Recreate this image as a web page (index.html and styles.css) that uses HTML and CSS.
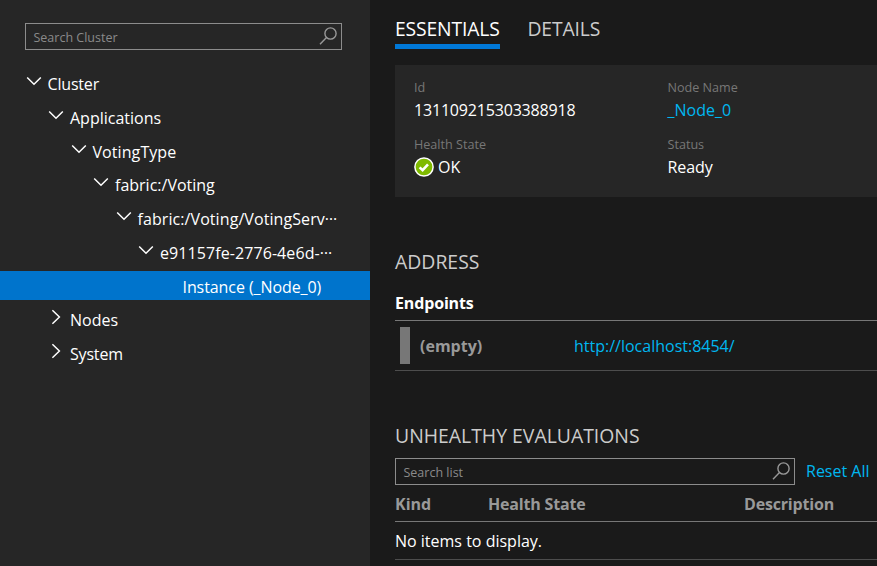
FILE: index.html
```
<!DOCTYPE html>
<html lang="en">
<head>
<meta charset="utf-8">
<title>Cluster Explorer</title>
<link rel="stylesheet" href="styles.css">
</head>
<body>
<div class="app">
  <aside class="sidebar">
    <div class="search search-cluster">
      <span class="hint">Search Cluster</span>
      <svg class="glass" viewBox="0 0 18 18"><circle cx="11.5" cy="6.5" r="5.6"/><path d="M7.5 10.5 1 17.2"/></svg>
    </div>
    <ul class="tree">
      <li class="row l0"><svg class="chev" viewBox="0 0 16 16"><path d="m1.2 4.5 6.8 6.8 6.8-6.8"/></svg><span class="name snug">Cluster</span></li>
      <li class="row l1"><svg class="chev" viewBox="0 0 16 16"><path d="m1.2 4.5 6.8 6.8 6.8-6.8"/></svg><span class="name">Applications</span></li>
      <li class="row l2"><svg class="chev" viewBox="0 0 16 16"><path d="m1.2 4.5 6.8 6.8 6.8-6.8"/></svg><span class="name wide">VotingType</span></li>
      <li class="row l3"><svg class="chev" viewBox="0 0 16 16"><path d="m1.2 4.5 6.8 6.8 6.8-6.8"/></svg><span class="name">fabric:/Voting</span></li>
      <li class="row l4"><svg class="chev" viewBox="0 0 16 16"><path d="m1.2 4.5 6.8 6.8 6.8-6.8"/></svg><span class="name wide">fabric:/Voting/VotingServ<span class="dots">…</span></span></li>
      <li class="row l5"><svg class="chev" viewBox="0 0 16 16"><path d="m1.2 4.5 6.8 6.8 6.8-6.8"/></svg><span class="name wide">e91157fe-2776-4e6d-<span class="dots">…</span></span></li>
      <li class="row l6 selected"><span class="name tight">Instance (_Node_0)</span></li>
      <li class="row l1"><svg class="chev" viewBox="0 0 16 16"><path d="m4.4 1.2 7 6.8-7 6.8"/></svg><span class="name">Nodes</span></li>
      <li class="row l1"><svg class="chev" viewBox="0 0 16 16"><path d="m4.4 1.2 7 6.8-7 6.8"/></svg><span class="name snug">System</span></li>
    </ul>
  </aside>
  <main class="main">
    <nav class="tabs"><span class="tab active">ESSENTIALS</span><span class="tab">DETAILS</span></nav>
    <section class="card">
      <div class="field"><div class="label">Id</div><div class="value snug">131109215303388918</div></div>
      <div class="field"><div class="label">Node Name</div><div class="value link">_Node_0</div></div>
      <div class="field"><div class="label">Health State</div><div class="value"><svg class="ok" viewBox="0 0 20 20"><circle cx="10" cy="10" r="9.1"/><path d="m5.6 10.4 3 2.7 5.4-5.8"/></svg><span>OK</span></div></div>
      <div class="field"><div class="label">Status</div><div class="value tight">Ready</div></div>
    </section>
    <h2 class="h-address">ADDRESS</h2>
    <h3>Endpoints</h3>
    <div class="endpoint"><i class="bar"></i><b>(empty)</b><span class="link">http://localhost:8454/</span></div>
    <h2 class="h-eval">UNHEALTHY EVALUATIONS</h2>
    <div class="filter">
      <div class="search search-list"><span class="hint">Search list</span><svg class="glass" viewBox="0 0 18 18"><circle cx="11.5" cy="6.5" r="5.6"/><path d="M7.5 10.5 1 17.2"/></svg></div>
      <span class="link reset">Reset All</span>
    </div>
    <div class="thead"><span>Kind</span><span class="snug">Health State</span><span class="snug">Description</span></div>
    <div class="empty">No items to display.</div>
  </main>
</div>
</body>
</html>
```
FILE: styles.css
```
* { box-sizing: border-box; }
body { margin: 0; background: #1a1a1a; color: #fff; font: 16px/24px "Open Sans", "Noto Sans", sans-serif; white-space: nowrap; overflow: hidden; }
.app { display: flex; width: 877px; height: 566px; }
.snug { letter-spacing: -0.18px; }
.tight { letter-spacing: -0.08px; }
.wide { letter-spacing: 0.08px; }
.sidebar { width: 370px; flex: none; background: #262626; padding-top: 23px; }
.main { flex: 1; min-width: 0; padding-left: 25px; }
.search { display: flex; align-items: center; justify-content: space-between; height: 27px; border: 1px solid #8c8c8c; color: #8a8a8a; font-size: 12.5px; padding: 0 4px 0 7.5px; }
.hint { padding-top: 2px; }
.search-cluster { width: 317px; margin-left: 25px; }
.glass { width: 18px; height: 18px; fill: none; stroke: #999; stroke-width: 1.4; margin-top: -1px; }
.tree { list-style: none; margin: 18px 0 0; padding: 0; }
.row { display: flex; align-items: center; height: 29px; margin-bottom: 4.75px; }
.name { padding-top: 3px; }
.chev { width: 16px; height: 16px; fill: none; stroke: #fff; stroke-width: 1.5; margin: -3px 6px 0 0; }
.dots { display: inline-block; transform: translateY(-5px); }
.l0 { padding-left: 25.5px; }
.l1 { padding-left: 48px; }
.l2 { padding-left: 70.5px; }
.l3 { padding-left: 93px; }
.l4 { padding-left: 115.5px; }
.l5 { padding-left: 138px; }
.l6 { padding-left: 182.5px; }
.selected { background: #0074cc; }
.tabs { display: flex; gap: 27.5px; height: 49px; font-size: 19.3px; letter-spacing: -0.12px; padding-top: 15px; color: #ccc; }
.tab { height: 34px; line-height: 28px; }
.active { width: 105px; color: #fff; border-bottom: 5px solid #0078d7; }
.card { margin-top: 16px; height: 132px; background: #262626; display: grid; grid-template-columns: 253.5px 1fr; grid-auto-rows: 57px; padding: 13px 0 0 19px; }
.label { font-size: 12.6px; line-height: 20px; color: #777; }
.value { display: flex; align-items: center; gap: 4px; }
.link { color: #00b7f0; }
.ok { width: 20px; height: 20px; fill: #7fba00; stroke: #fff; stroke-width: 1.5; margin-top: -1px; }
.ok path { fill: none; stroke-width: 2.6; }
h2 { margin: 0; font-size: 19.4px; line-height: 28px; font-weight: 400; color: #ccc; }
h3 { margin: 15px 0 0; font-size: 16px; line-height: 24px; letter-spacing: -0.15px; }
.h-address { margin-top: 51px; }
.endpoint { display: flex; align-items: center; height: 51px; margin-top: 5px; border: solid #777; border-width: 1px 0; border-bottom-color: #4d4d4d; padding-left: 5px; }
.bar { width: 10px; height: 37px; background: #777; }
.endpoint b { width: 154px; margin-left: 10px; color: #999; }
.h-eval { margin-top: 51px; }
.filter { display: flex; align-items: center; gap: 11px; margin-top: 8px; }
.search-list { width: 400px; }
.reset { margin-top: -2px; }
.thead { display: grid; grid-template-columns: 93px 256px 1fr; font-weight: 700; color: #999; height: 37px; padding-top: 7px; border-bottom: 1px solid #777; }
.empty { height: 38px; padding-top: 7px; border-bottom: 1px solid #4d4d4d; }
```
